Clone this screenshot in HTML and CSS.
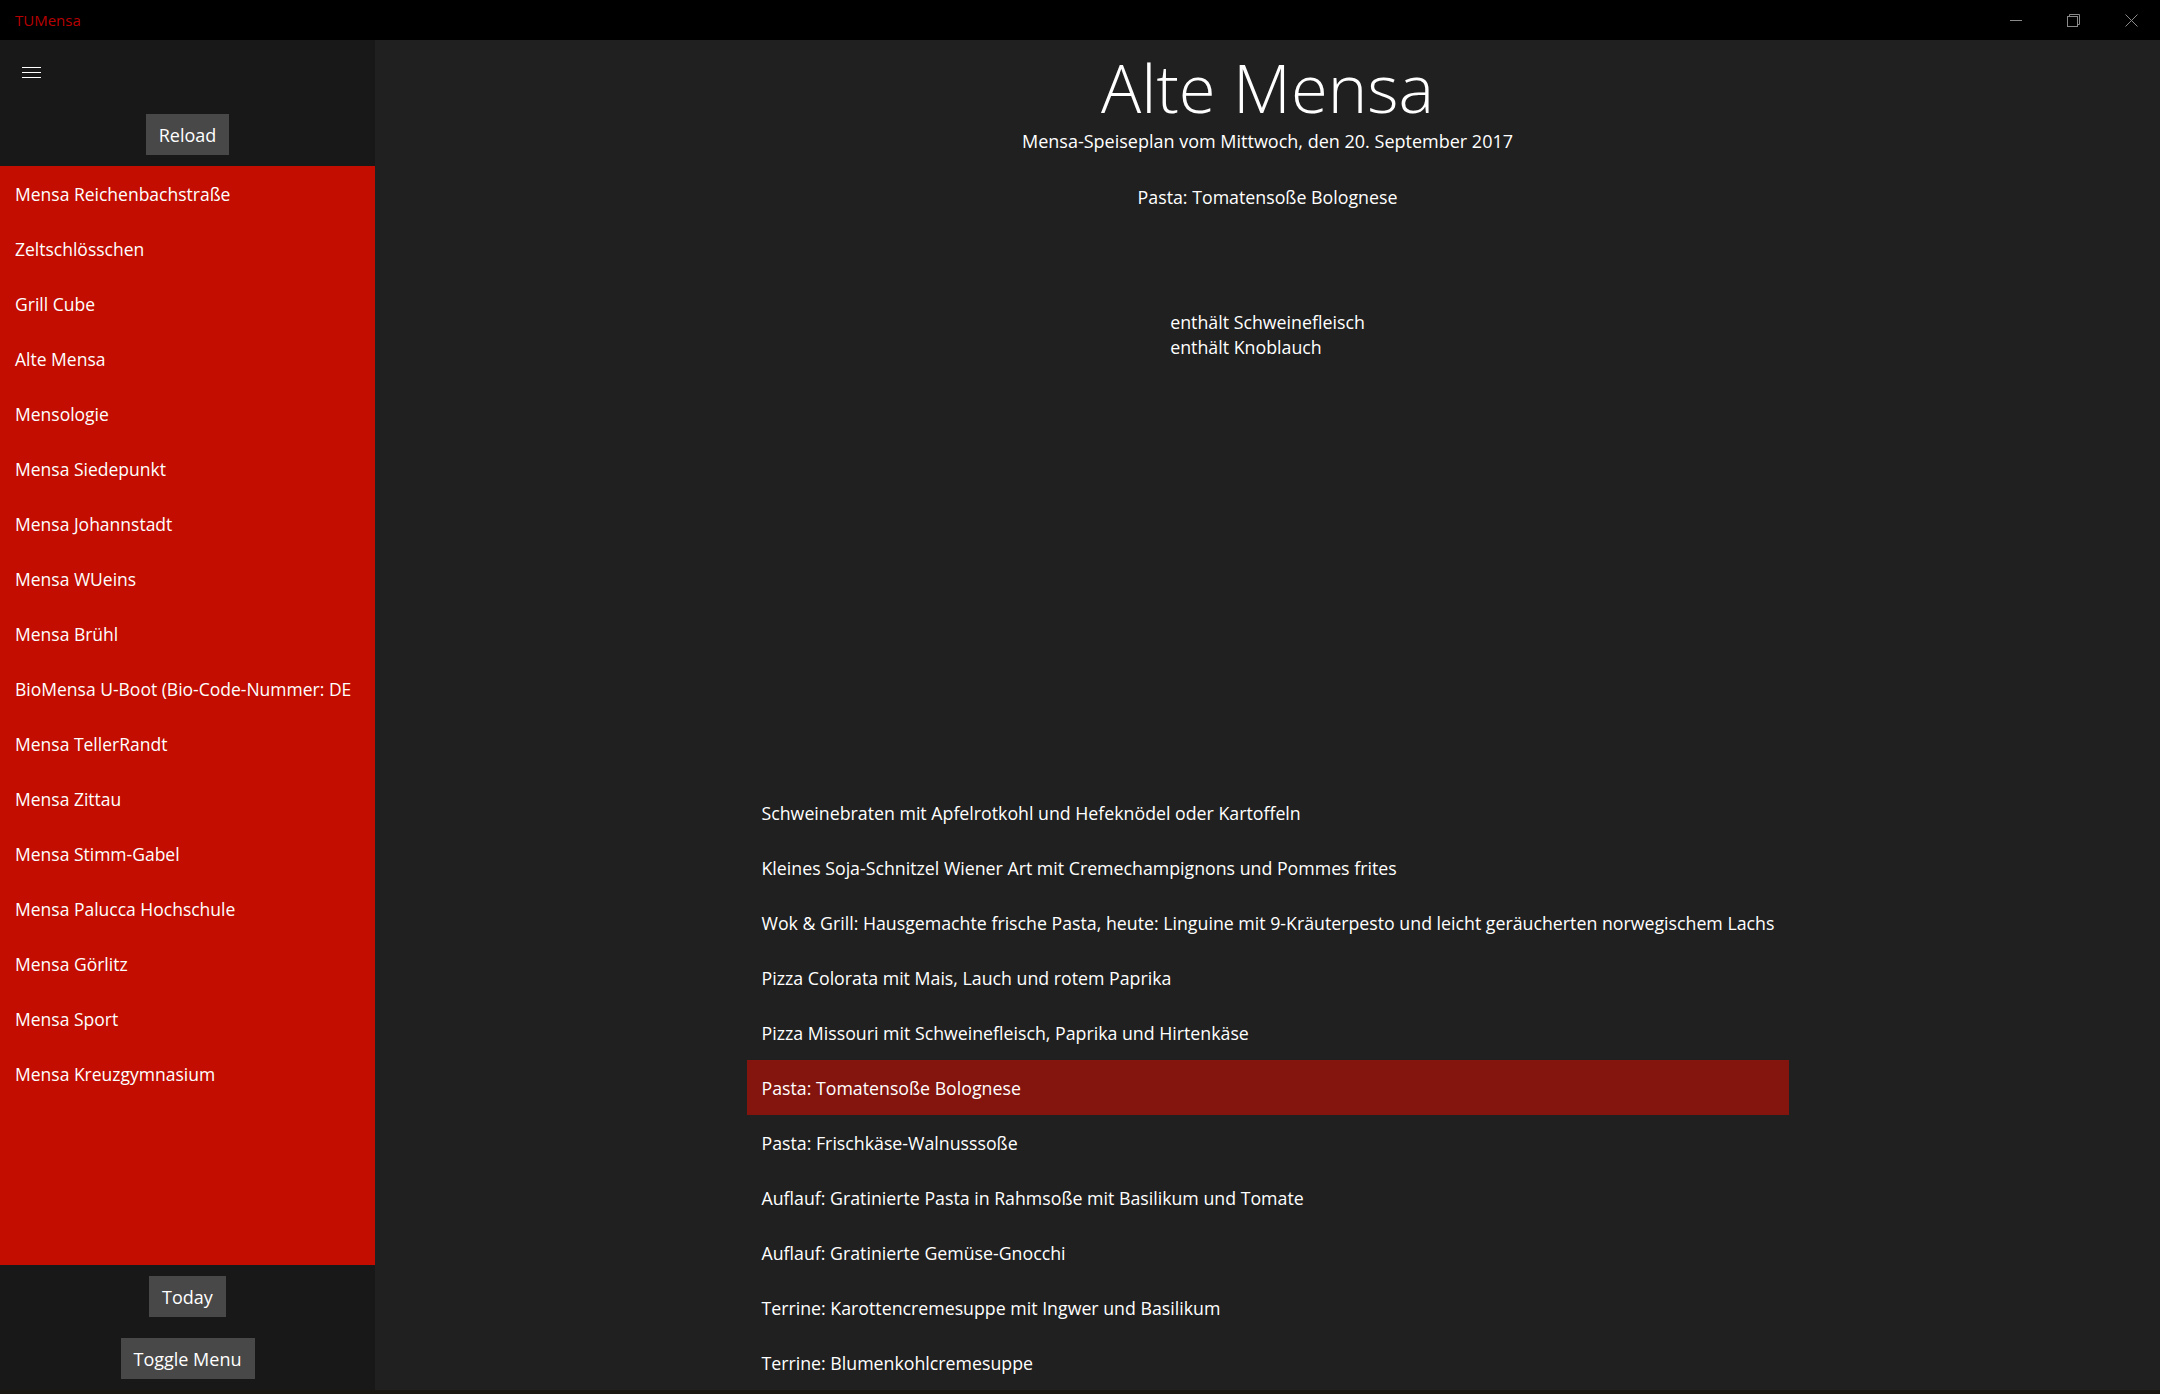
FILE: index.html
```html
<!DOCTYPE html>
<html lang="de">
<head>
<meta charset="utf-8">
<title>TUMensa</title>
<link rel="stylesheet" href="styles.css">
</head>
<body>
<div class="window">
  <header class="titlebar">
    <span class="app-title">TUMensa</span>
    <div class="caption-buttons">
      <span class="caption-btn">
        <svg width="12" height="12" viewBox="0 0 12 12"><path d="M0 6.5H12" stroke="#8a8a8a" stroke-width="1" fill="none"/></svg>
      </span>
      <span class="caption-btn">
        <svg width="13" height="13" viewBox="0 0 13 13"><rect x="0.5" y="2.5" width="10" height="10" stroke="#8a8a8a" fill="none"/><path d="M2.5 2.5V0.5H12.5V10.5H10.5" stroke="#8a8a8a" fill="none"/></svg>
      </span>
      <span class="caption-btn">
        <svg width="13" height="13" viewBox="0 0 13 13"><path d="M0.5 0.5L12.5 12.5M12.5 0.5L0.5 12.5" stroke="#8a8a8a" stroke-width="1" fill="none"/></svg>
      </span>
    </div>
  </header>
  <div class="app">
    <aside class="sidebar">
      <div class="sidebar-top">
        <div class="hamburger"><span></span><span></span><span></span></div>
        <button class="btn">Reload</button>
      </div>
      <nav class="mensa-list">
        <div class="mensa-item">Mensa Reichenbachstraße</div>
        <div class="mensa-item">Zeltschlösschen</div>
        <div class="mensa-item">Grill Cube</div>
        <div class="mensa-item">Alte Mensa</div>
        <div class="mensa-item">Mensologie</div>
        <div class="mensa-item">Mensa Siedepunkt</div>
        <div class="mensa-item">Mensa Johannstadt</div>
        <div class="mensa-item">Mensa WUeins</div>
        <div class="mensa-item">Mensa Brühl</div>
        <div class="mensa-item">BioMensa U-Boot (Bio-Code-Nummer: DE</div>
        <div class="mensa-item">Mensa TellerRandt</div>
        <div class="mensa-item">Mensa Zittau</div>
        <div class="mensa-item">Mensa Stimm-Gabel</div>
        <div class="mensa-item">Mensa Palucca Hochschule</div>
        <div class="mensa-item">Mensa Görlitz</div>
        <div class="mensa-item">Mensa Sport</div>
        <div class="mensa-item">Mensa Kreuzgymnasium</div>
      </nav>
      <div class="sidebar-bottom">
        <button class="btn">Today</button>
        <button class="btn">Toggle Menu</button>
      </div>
    </aside>
    <main class="main">
      <h1 class="title">Alte Mensa</h1>
      <p class="subtitle">Mensa-Speiseplan vom Mittwoch, den 20. September 2017</p>
      <p class="detail-name">Pasta: Tomatensoße Bolognese</p>
      <div class="detail-notes">
        <div>enthält Schweinefleisch</div>
        <div>enthält Knoblauch</div>
      </div>
      <ul class="meal-list">
        <li class="meal">Schweinebraten mit Apfelrotkohl und Hefeknödel oder Kartoffeln</li>
        <li class="meal">Kleines Soja-Schnitzel Wiener Art mit Cremechampignons und Pommes frites</li>
        <li class="meal">Wok &amp; Grill: Hausgemachte frische Pasta, heute: Linguine mit 9-Kräuterpesto und leicht geräucherten norwegischem Lachs</li>
        <li class="meal">Pizza Colorata mit Mais, Lauch und rotem Paprika</li>
        <li class="meal">Pizza Missouri mit Schweinefleisch, Paprika und Hirtenkäse</li>
        <li class="meal selected">Pasta: Tomatensoße Bolognese</li>
        <li class="meal">Pasta: Frischkäse-Walnusssoße</li>
        <li class="meal">Auflauf: Gratinierte Pasta in Rahmsoße mit Basilikum und Tomate</li>
        <li class="meal">Auflauf: Gratinierte Gemüse-Gnocchi</li>
        <li class="meal">Terrine: Karottencremesuppe mit Ingwer und Basilikum</li>
        <li class="meal">Terrine: Blumenkohlcremesuppe</li>
      </ul>
    </main>
  </div>
</div>
</body>
</html>
```
FILE: styles.css
```css
* { box-sizing: border-box; }
html, body { margin: 0; padding: 0; }
body {
  width: 2160px;
  height: 1394px;
  overflow: hidden;
  background: #1b1812;
  font-family: "Open Sans", "Noto Sans", sans-serif;
  color: #ffffff;
}
.window {
  height: 1390px;
  display: flex;
  flex-direction: column;
  background: #202020;
}
.titlebar {
  height: 40px;
  flex: none;
  background: #000000;
  display: flex;
  align-items: center;
  justify-content: space-between;
}
.app-title {
  padding-left: 15px;
  font-size: 15px;
  color: #b80000;
  line-height: 40px;
}
.caption-buttons { display: flex; height: 40px; }
.caption-btn {
  width: 57.5px;
  height: 40px;
  display: flex;
  align-items: center;
  justify-content: center;
}
.app { flex: 1; display: flex; min-height: 0; }
.sidebar {
  width: 375px;
  flex: none;
  background: #181818;
  display: flex;
  flex-direction: column;
}
.sidebar-top {
  display: flex;
  flex-direction: column;
  align-items: center;
  padding-top: 27px;
  padding-bottom: 11px;
}
.hamburger {
  align-self: flex-start;
  margin-left: 22px;
  width: 19px;
  height: 11px;
  display: flex;
  flex-direction: column;
  justify-content: space-between;
}
.hamburger span { height: 1px; background: #ffffff; }
.btn {
  height: 41px;
  padding: 0 13px;
  border: none;
  background: #484848;
  color: #ffffff;
  font-family: inherit;
  font-size: 18px;
}
.sidebar-top .btn { margin-top: 36px; }
.mensa-list {
  flex: 1;
  background: #c20d00;
}
.mensa-item {
  height: 55px;
  display: flex;
  align-items: center;
  padding: 2px 0 0 15px;
  font-size: 17.5px;
  line-height: 25px;
  white-space: nowrap;
  overflow: hidden;
}
.sidebar-bottom {
  height: 125px;
  display: flex;
  flex-direction: column;
  align-items: center;
  justify-content: center;
  gap: 21px;
}
.main {
  flex: 1;
  display: flex;
  flex-direction: column;
  align-items: center;
  padding-top: 7px;
  overflow: hidden;
}
.title {
  margin: 0;
  font-size: 67px;
  font-weight: 300;
  line-height: 80px;
}
.subtitle {
  margin: 2px 0 0;
  font-size: 18px;
  line-height: 25px;
}
.detail-name {
  margin: 31px 0 0;
  font-size: 17.8px;
  line-height: 25px;
}
.detail-notes {
  margin-top: 100px;
  font-size: 17.8px;
  line-height: 25px;
}
.meal-list {
  list-style: none;
  margin: 425px 0 0;
  padding: 0;
  width: 1042px;
}
.meal {
  height: 55px;
  display: flex;
  align-items: center;
  padding: 2px 0 0 15px;
  font-size: 17.75px;
  line-height: 25px;
  white-space: nowrap;
}
.meal.selected { background: #84140e; }
```
